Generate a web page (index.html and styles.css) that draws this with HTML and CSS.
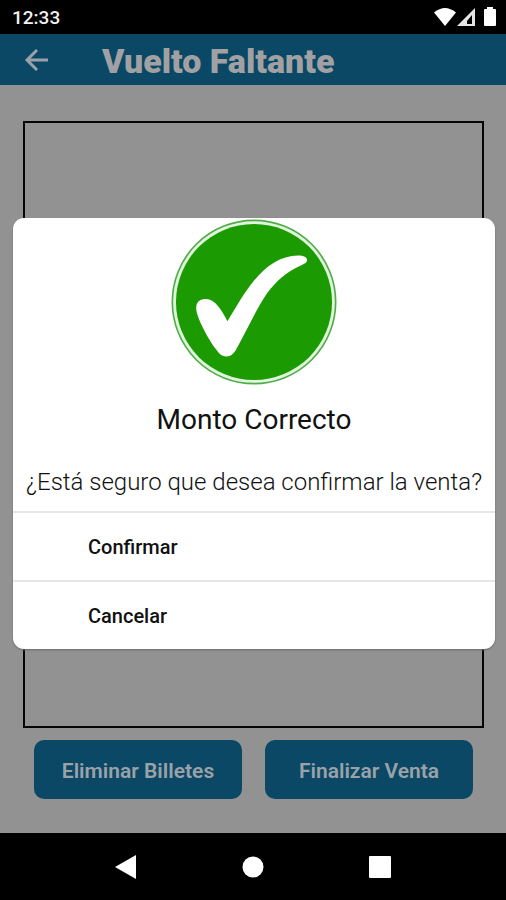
FILE: index.html
```html
<!DOCTYPE html>
<html lang="es">
<head>
<meta charset="utf-8">
<meta name="viewport" content="width=device-width, initial-scale=1">
<title>Vuelto Faltante</title>
<link rel="stylesheet" href="styles.css">
</head>
<body>
<div class="status-bar">
  <span class="clock">12:33</span>
  <svg class="status-icons" viewBox="0 0 64 20" aria-hidden="true">
    <path fill="#fff" d="M0 5.500Q11 -3.500 22 5.500L11 19Z"/>
    <path fill="#e6e6e6" fill-rule="evenodd" d="M23 19L41 1V19ZM33 17H38V8L33 14Z"/>
    <path fill="#fff" d="M53 2V0H59V2H61Q62 2 62 3V18Q62 19 61 19H51Q50 19 50 18V3Q50 2 51 2Z"/>
  </svg>
</div>
<div class="app">
  <header class="app-bar">
    <button class="back" type="button" aria-label="Volver">
      <svg viewBox="0 0 24 24" aria-hidden="true"><path d="M23 12H2M12 2L2 12L12 22"/></svg>
    </button>
    <h1>Vuelto Faltante</h1>
  </header>
  <main class="content">
    <section class="frame"></section>
    <div class="actions">
      <button class="action" type="button">Eliminar Billetes</button>
      <button class="action" type="button">Finalizar Venta</button>
    </div>
  </main>
  <div class="overlay">
    <div class="dialog" role="dialog" aria-labelledby="dialog-title">
      <svg class="check" viewBox="33 26 500 500" aria-hidden="true">
        <circle cx="283" cy="276" r="246" fill="#dff6dc" stroke="#52ab4b" stroke-width="5"/>
        <circle cx="283" cy="276" r="235" fill="#1b9a02"/>
        <path fill="#fff" d="M109 296C108 275 121 267 139 267C164 267 184 296 203 334C230 291 253 248 282 213C321 166 362 137 416 136C434 136 444 143 443 151C442 158 435 161 424 166C381 185 351 212 323 249C290 297 263 358 232 414C225 428 216 440 200 440C183 440 176 428 166 415C145 386 110 323 109 296Z"/>
      </svg>
      <h2 id="dialog-title">Monto Correcto</h2>
      <p>¿Está seguro que desea confirmar la venta?</p>
      <button class="option" type="button">Confirmar</button>
      <button class="option" type="button">Cancelar</button>
    </div>
  </div>
</div>
<nav class="nav-bar">
  <button type="button" aria-label="Atrás"><svg viewBox="0 0 24 24" aria-hidden="true"><path d="M1 12L22 0V24Z"/></svg></button>
  <button type="button" aria-label="Inicio"><svg viewBox="0 0 24 24" aria-hidden="true"><circle cx="12" cy="12" r="10.500"/></svg></button>
  <button type="button" aria-label="Recientes"><svg viewBox="0 0 24 24" aria-hidden="true"><rect x="1" y="1" width="22" height="22" rx="1"/></svg></button>
</nav>
</body>
</html>
```

FILE: styles.css
```css
* {
  box-sizing: border-box;
}

body {
  margin: 0;
  min-height: 100vh;
  display: flex;
  flex-direction: column;
  background: #000;
  font-family: Roboto, "Liberation Sans", sans-serif;
}

h1, h2, p {
  margin: 0;
}

button {
  margin: 0;
  padding: 0;
  border: 0;
  background: none;
  font-family: inherit;
}

svg {
  display: block;
}

.status-bar {
  height: 34px;
  padding: 0 8px 0 12px;
  display: flex;
  align-items: center;
  justify-content: space-between;
  color: #f2f2f2;
}

.clock {
  font-size: 19px;
  font-weight: 500;
  line-height: 24px;
  padding-top: 2px;
}

.status-icons {
  width: 64px;
  height: 20px;
}

.app {
  position: relative;
  flex: 1;
  display: flex;
  flex-direction: column;
  background: #929292;
}

.app-bar {
  height: 51px;
  padding: 0 24px;
  display: flex;
  align-items: center;
  gap: 52px;
  background: #0a4866;
  color: #a1a1a4;
}

.back svg {
  width: 26px;
  height: 24px;
  fill: none;
  stroke: #9aa2a8;
  stroke-width: 3;
}

.app-bar h1 {
  font-size: 34px;
  font-weight: 900;
  line-height: 40px;
  padding-top: 2px;
}

.content {
  flex: 1;
  display: flex;
  flex-direction: column;
  gap: 12px;
  padding: 36px 22px 34px 23px;
}

.frame {
  flex: 1;
  border: 2px solid #050505;
}

.actions {
  display: flex;
  gap: 23px;
  padding: 0 11px;
}

.action {
  flex: 1;
  height: 59px;
  padding-top: 2px;
  border-radius: 10px;
  background: #0a4866;
  color: #9aa2a8;
  font-size: 21px;
  font-weight: 600;
}

.overlay {
  position: absolute;
  inset: 0;
  display: flex;
  align-items: center;
  padding: 0 11px 0 13px;
}

.dialog {
  width: 100%;
  padding-top: 1px;
  overflow: hidden;
  border-radius: 11px;
  background: #fff;
  box-shadow: 0 1px 2px #6c6c6c;
  color: #111;
  text-align: center;
}

.check {
  width: 166px;
  height: 166px;
  margin: 0 auto;
}

.dialog h2 {
  margin-top: 17px;
  font-size: 28px;
  font-weight: 400;
  line-height: 36px;
}

.dialog p {
  padding: 28px 0 13px;
  font-size: 24px;
  font-weight: 300;
  line-height: 32px;
}

.option {
  display: block;
  width: 100%;
  height: 69px;
  padding: 0 75px;
  border-top: 2px solid #e6e6e6;
  color: #111;
  font-size: 20px;
  font-weight: 500;
  text-align: left;
}

.nav-bar {
  height: 67px;
  display: flex;
  justify-content: center;
  align-items: center;
  gap: 103px;
}

.nav-bar svg {
  width: 24px;
  height: 24px;
  fill: #fff;
}
```
